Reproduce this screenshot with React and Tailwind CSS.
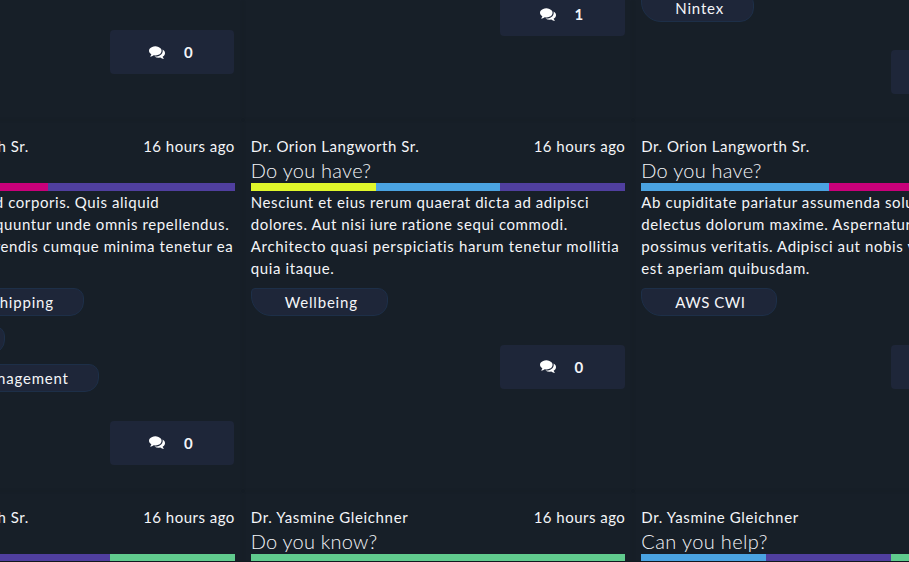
const C = {
  yellow: "bg-[#e0f72b]",
  blue: "bg-[#4aa3e2]",
  purple: "bg-[#503f9f]",
  pink: "bg-[#c9007a]",
  green: "bg-[#60cb8e]",
};

function CommentsIcon({ className }) {
  return (
    <svg viewBox="0 0 1792 1792" fill="currentColor" className={className}>
      <path d="M1408 768q0 139-94 257t-256.500 186.500-353.500 68.500q-86 0-176-16-124 88-278 128-36 9-86 16h-3q-11 0-20.500-8t-11.500-21q-1-3-1-6.500t.5-6.500 2-6l2.500-5 3.500-5.500 4-5 4.500-5 4-4.500q5-6 23-25t26-29.500 22.500-29 25-38.500 20.500-44q-124-72-195-177t-71-224q0-139 94-257t256.500-186.500 353.500-68.500 353.500 68.500 256.500 186.500 94 257zm384 256q0 120-71 224.500t-195 176.500q10 24 20.500 44t25 38.500 22.500 29 26 29.500 23 25q1 1 4 4.500t4.500 5 4 5 3.500 5.500l2.500 5 2 6 .5 6.500-1 6.500q-3 14-13 22t-22 7q-50-7-86-16-154-40-278-128-90 16-176 16-271 0-472-132 58 4 88 4 161 0 309-45t264-129q125-92 192-212t67-254q0-77-23-152 129 71 204 178t75 230z" />
    </svg>
  );
}

function Chip({ children, width, align = "justify-start pl-[33px]" }) {
  return (
    <div className={`${width} ${align} flex h-7 shrink-0 items-center whitespace-nowrap rounded-tl-[4px] rounded-tr-[10px] rounded-br-[14px] rounded-bl-[20px] border border-[#1d2f48] bg-[#1e2639]`}>
      {children}
    </div>
  );
}

function Comments({ count, iconShift = "-mt-px" }) {
  return (
    <div className="mr-[0.7px] ml-auto flex h-11 w-[124.6px] shrink-0 items-center rounded bg-[#1e2639] pl-[39.5px]">
      <CommentsIcon className={`${iconShift} size-4 text-white`} />
      <span className="ml-[19px] font-bold">{count}</span>
    </div>
  );
}

function Card({ name, nameTracking = "tracking-[0.54px]", title, titleTracking = "tracking-[0.25px]", bars, lines, align = "justify-start", chipAlign, chips, count }) {
  return (
    <article className="flex h-[371px] w-[390.5px] shrink-0 flex-col overflow-hidden px-2 pt-[15px] shadow-[0_0_3px_rgba(0,0,0,0.09)]">
      <div className="flex h-[23px] shrink-0 justify-between leading-[23px]">
        <span className={nameTracking}>{name}</span>
        <span className="tracking-[0.48px]">16 hours ago</span>
      </div>
      <h2 className={`${titleTracking} h-[25px] shrink-0 text-[20px] font-light leading-[24px]`}>{title}</h2>
      <div className="flex h-2 shrink-0">
        {bars.map((b, i) => (
          <div key={i} className={`${b} flex-1`} />
        ))}
      </div>
      {lines && (
        <div className="h-[97px] shrink-0 whitespace-nowrap leading-[22px]">
          {lines.map(([text, cls]) => (
            <p key={text} className={`${cls} ${align} flex`}>{text}</p>
          ))}
        </div>
      )}
      {chips && (
        <div className="mb-[29px] flex shrink-0 flex-col gap-[10px]">
          {chips.map(([text, w]) => (
            <Chip key={text} width={w} align={chipAlign}>{text}</Chip>
          ))}
        </div>
      )}
      {count !== undefined && <Comments count={count} iconShift="-mt-[2.4px]" />}
    </article>
  );
}

function CardEnd({ space, chip, count }) {
  return (
    <article className="flex h-[120px] w-[390.5px] shrink-0 flex-col overflow-hidden px-2 shadow-[0_0_3px_rgba(0,0,0,0.09)]">
      {chip}
      <div className={`${space} shrink-0`} />
      <Comments count={count} />
    </article>
  );
}

export default function App() {
  return (
    <main className="h-[562px] w-[909px] overflow-hidden border-b border-[#12171e] bg-[#171f28] font-['Lato',sans-serif] text-[15px] tracking-[0.8px] text-[#f4f5f8]">
      <div className="-ml-[147.7px] w-[1171.5px]">
        <div className="flex">
          <CardEnd space="h-[30px]" count={0} />
          <CardEnd space="-mt-2" count={1} />
          <CardEnd
            space="h-[28px]"
            chip={<div className="-mt-[6px] shrink-0"><Chip width="w-[113px]">Nintex</Chip></div>}
            count={0}
          />
        </div>
        <div className="flex">
          <Card
            name="Dr. Orion Langworth Sr."
            title="Do you have?"
            bars={[C.pink, C.purple]}
            align="justify-end"
            lines={[
              ["id corporis. Quis aliquid", "w-[299px] tracking-[0.58px]"],
              ["consequuntur unde omnis repellendus.", "w-[369px] tracking-[0.6px]"],
              ["perferendis cumque minima tenetur ea", "w-[373px] tracking-[0.62px]"],
              ["quia.", "w-[100px]"],
            ]}
            chipAlign="justify-end pr-[29.5px]"
            chips={[["Freight and Shipping", "w-[224px]"], ["Planning", "w-[145px]"], ["Change Management", "w-[239px]"]]}
            count={0}
          />
          <Card
            name="Dr. Orion Langworth Sr."
            title="Do you have?"
            bars={[C.yellow, C.blue, C.purple]}
            lines={[
              ["Nesciunt et eius rerum quaerat dicta ad adipisci", "tracking-[0.57px]"],
              ["dolores. Aut nisi iure ratione sequi commodi.", "tracking-[0.58px]"],
              ["Architecto quasi perspiciatis harum tenetur mollitia", "tracking-[0.66px]"],
              ["quia itaque.", "tracking-[0.6px]"],
            ]}
            chips={[["Wellbeing", "w-[137px]"]]}
            count={0}
          />
          <Card
            name="Dr. Orion Langworth Sr."
            title="Do you have?"
            bars={[C.blue, C.pink]}
            lines={[
              ["Ab cupiditate pariatur assumenda soluta", "tracking-[0.6px]"],
              ["delectus dolorum maxime. Aspernatur", "tracking-[0.6px]"],
              ["possimus veritatis. Adipisci aut nobis vel", "tracking-[0.6px]"],
              ["est aperiam quibusdam.", "tracking-[0.6px]"],
            ]}
            chips={[["AWS CWI", "w-[136px] tracking-[0.5px]"]]}
            count={0}
          />
        </div>
        <div className="flex">
          <Card name="Dr. Orion Langworth Sr." title="Do you" bars={[C.blue, C.purple, C.green]} />
          <Card name="Dr. Yasmine Gleichner" nameTracking="tracking-[0.65px]" title="Do you know?" titleTracking="tracking-[0.2px]" bars={[C.green]} />
          <Card name="Dr. Yasmine Gleichner" nameTracking="tracking-[0.65px]" title="Can you help?" titleTracking="tracking-[0.38px]" bars={[C.blue, C.purple, C.green]} />
        </div>
      </div>
    </main>
  );
}
